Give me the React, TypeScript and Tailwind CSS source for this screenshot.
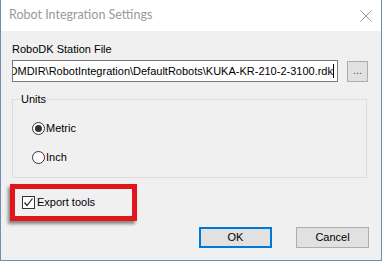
import React from "react";

const path = "C:\\RoboDK\\ROBOMDIR\\RobotIntegration\\DefaultRobots\\KUKA-KR-210-2-3100.rdk";

function Radio({ checked, label }: { checked?: boolean; label: string }) {
	return (
		<div className="flex items-center h-[14px]">
			<span className="w-[13px] h-[13px] rounded-full border border-[#333] bg-white flex items-center justify-center">
				{checked && <span className="w-[7px] h-[7px] rounded-full bg-[#333]" />}
			</span>
			<span className="ml-[1px]">{label}</span>
		</div>
	);
}

export default function App() {
	return (
		<div
			className="w-[382px] h-[261px] bg-[#f0f0f0] border-x border-b border-[#6f8fb0] flex flex-col text-[11px] text-black"
			style={{ fontFamily: '"Liberation Sans", Arial, sans-serif' }}
		>
			<div className="h-[31px] bg-white flex items-center justify-between pl-[8px] pr-[8px] shrink-0">
				<span className="text-[12.5px] text-[#9a9a9a]" style={{ fontFamily: 'Lato, "Noto Sans", sans-serif' }}>
					Robot Integration Settings
				</span>
				<svg width="12" height="12" viewBox="0 0 12 12" className="mr-[1px]">
					<path d="M0.5 0.5 L11.5 11.5 M11.5 0.5 L0.5 11.5" stroke="#999" strokeWidth="1" />
				</svg>
			</div>

			<div className="flex-1 px-[11px] flex flex-col">
				<div className="mt-[12px] leading-[13px]">RoboDK Station File</div>

				<div className="flex items-center mt-[4px] gap-[9px]">
					<div className="w-[326px] h-[22px] bg-white border border-[#7a7a7a] overflow-hidden flex justify-end items-center pr-[3px]">
						<span className="whitespace-nowrap">{path}</span>
						<span className="w-px h-[14px] bg-black shrink-0" />
					</div>
					<div className="w-[21px] h-[21px] bg-[#e1e1e1] border border-[#adadad] flex items-center justify-center text-[#555] leading-none pb-[2px]">
						...
					</div>
				</div>

				<div className="relative mt-[17px] mr-[3px] h-[79px] border border-[#dcdcdc] pl-[19px] pt-[21px] flex flex-col gap-[15px]">
					<span className="absolute -top-[7px] left-[7px] px-px bg-[#f0f0f0] leading-[13px]">Units</span>
					<Radio checked label="Metric" />
					<Radio label="Inch" />
				</div>

				<div className="mt-[6px] -ml-[2px] w-[127px] h-[37px] border-[5px] border-[#e2141c] shadow-[-2px_3px_3px_rgba(0,0,0,0.45)] flex items-center pl-[7px]">
					<span className="w-[13px] h-[13px] border border-[#333] bg-white flex items-center justify-center">
						<svg width="11" height="11" viewBox="0 0 11 11">
							<path d="M1.5 5.5 L4 8.5 L9.5 1.5" fill="none" stroke="#222" strokeWidth="1.2" />
						</svg>
					</span>
					<span className="ml-[2px]">Export tools</span>
				</div>

				<div className="flex justify-end mt-[6px] gap-[24px] pr-[1px]">
					<div className="w-[73px] h-[21px] bg-[#e1e1e1] border-2 border-[#0078d7] flex items-center justify-center">OK</div>
					<div className="w-[73px] h-[21px] bg-[#e1e1e1] border border-[#adadad] flex items-center justify-center">Cancel</div>
				</div>
			</div>
		</div>
	);
}
